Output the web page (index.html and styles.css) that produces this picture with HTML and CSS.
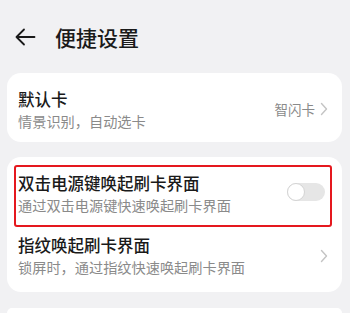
FILE: index.html
```html
<!DOCTYPE html>
<html lang="zh">
<head>
<meta charset="utf-8">
<link rel="stylesheet" href="styles.css">
</head>
<body>
<div class="header">
  <svg class="back" width="22" height="18" viewBox="0 0 22 18"><path d="M10 1.5 L2.5 9 L10 16.5 M2.5 9 H20.5" fill="none" stroke="#1a1a1a" stroke-width="1.8" stroke-linecap="round" stroke-linejoin="round"/></svg>
  <span class="title">便捷设置</span>
</div>

<div class="card card1">
  <div class="row row1">
    <div class="texts">
      <div class="t">默认卡</div>
      <div class="s">情景识别，自动选卡</div>
    </div>
    <div class="value">智闪卡</div>
    <svg class="chev" width="8" height="14" viewBox="0 0 8 14"><path d="M1.5 1.5 L6.5 7 L1.5 12.5" fill="none" stroke="#c4c4c4" stroke-width="1.4" stroke-linecap="round" stroke-linejoin="round"/></svg>
  </div>
</div>

<div class="card card2">
  <div class="row row2">
    <div class="texts">
      <div class="t">双击电源键唤起刷卡界面</div>
      <div class="s">通过双击电源键快速唤起刷卡界面</div>
    </div>
    <div class="toggle"><div class="knob"></div></div>
    <div class="highlight"></div>
  </div>
  <div class="row row3">
    <div class="texts">
      <div class="t">指纹唤起刷卡界面</div>
      <div class="s">锁屏时，通过指纹快速唤起刷卡界面</div>
    </div>
    <svg class="chev" width="8" height="14" viewBox="0 0 8 14"><path d="M1.5 1.5 L6.5 7 L1.5 12.5" fill="none" stroke="#c4c4c4" stroke-width="1.4" stroke-linecap="round" stroke-linejoin="round"/></svg>
  </div>
</div>

<div class="card card3"></div>
</body>
</html>
```

FILE: styles.css
```css
html, body {
  margin: 0;
  padding: 0;
}
body {
  background: #f1f1f3;
  font-family: "Noto Sans CJK SC", "Noto Sans", sans-serif;
  color: #1a1a1a;
  width: 350px;
  height: 313px;
  overflow: hidden;
}
.header {
  height: 73px;
  display: flex;
  align-items: center;
  padding-left: 14px;
  box-sizing: border-box;
}
.back {
  display: block;
  margin-top: 1px;
}
.title {
  font-size: 21px;
  line-height: 28px;
  margin-left: 19px;
  font-weight: 500;
  color: #1a1a1a;
}
.card {
  background: #ffffff;
  border-radius: 14px;
  margin: 0 8px 0 7px;
}
.card1 {
  height: 69px;
}
.card2 {
  margin-top: 15px;
  height: 135px;
  padding-top: 4px;
  box-sizing: border-box;
}
.card3 {
  margin-top: 16px;
  height: 5px;
  border-radius: 14px 14px 0 0;
}
.row {
  display: flex;
  align-items: center;
  padding: 0 14px 0 11px;
  position: relative;
  box-sizing: border-box;
}
.texts {
  flex: 1;
  min-width: 0;
}
.t {
  font-size: 16.5px;
  line-height: 22px;
  font-weight: 500;
  white-space: nowrap;
}
.s {
  font-size: 14.2px;
  line-height: 20px;
  color: #8a8a8a;
  margin-top: 1px;
  white-space: nowrap;
}
.row1 {
  height: 69px;
  padding-top: 3px;
}
.value {
  font-size: 13.5px;
  color: #8a8a8a;
  margin-right: 5px;
}
.chev {
  display: block;
}
.row2 {
  height: 64px;
  padding-top: 1px;
  padding-right: 17px;
}
.row3 {
  height: 63px;
  padding-bottom: 2px;
}
.toggle {
  width: 38px;
  height: 18px;
  border-radius: 9px;
  background: #e6e6e6;
  position: relative;
  margin-top: -3px;
}
.knob {
  position: absolute;
  left: 0;
  top: 0;
  width: 16px;
  height: 16px;
  border-radius: 50%;
  background: #ffffff;
  border: 1px solid #d4d4d4;
}
.highlight {
  position: absolute;
  left: 7px;
  right: 10px;
  top: 4px;
  height: 62px;
  border: 2px solid #e5181e;
  border-radius: 3px;
  box-sizing: border-box;
  pointer-events: none;
}
```
